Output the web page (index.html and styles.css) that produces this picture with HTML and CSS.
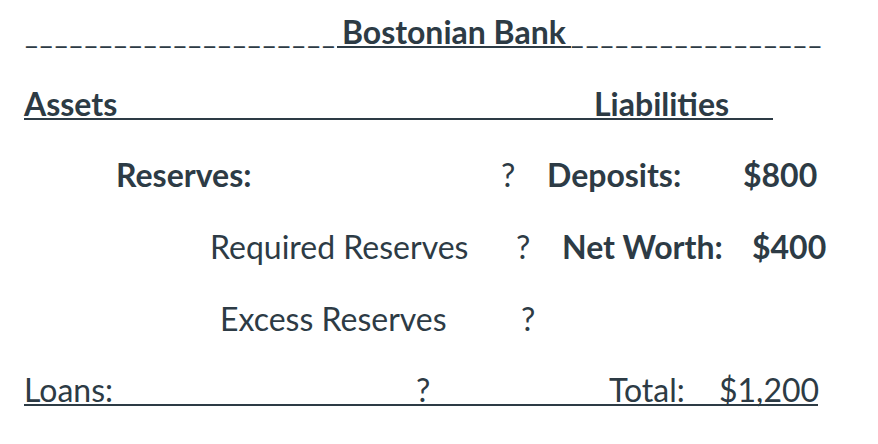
FILE: index.html
```html
<!DOCTYPE html>
<html>
<head>
<meta charset="utf-8">
<link rel="stylesheet" href="styles.css">
</head>
<body>
<div class="sheet">
  <div class="row title-row">
    <span class="dashes">_____________________</span>
    <span class="title">Bostonian Bank</span>
    <span class="dashes">_________________</span>
  </div>
  <div class="row">
    <div class="ruled heads">
      <span class="b">Assets</span>
      <span class="b">Liabilities</span>
    </div>
  </div>
  <div class="row r3">
    <span class="b">Reserves:</span>
    <span>?</span>
    <span class="b">Deposits:</span>
    <span class="b">$800</span>
  </div>
  <div class="row r4">
    <span>Required Reserves</span>
    <span>?</span>
    <span class="b">Net Worth:</span>
    <span class="b">$400</span>
  </div>
  <div class="row r5">
    <span>Excess Reserves</span>
    <span>?</span>
  </div>
  <div class="row">
    <div class="ruled totals">
      <span>Loans:</span>
      <span>?</span>
      <span>Total:</span>
      <span>$1,200</span>
    </div>
  </div>
</div>
</body>
</html>
```

FILE: styles.css
```css
html, body {
  margin: 0;
  padding: 0;
  background: #ffffff;
}
.sheet {
  font-family: Lato, "Noto Sans", sans-serif;
  font-size: 32px;
  color: #2d3b45;
  width: 878px;
}
.row {
  height: 71.64px;
  box-sizing: border-box;
  padding-top: 19.2px;
  line-height: 26.8px;
  display: flex;
  align-items: flex-start;
  white-space: nowrap;
}
.b {
  font-weight: 700;
}
.title-row {
  padding-left: 25px;
  align-items: baseline;
}
.dashes {
  font-weight: 400;
  font-size: 28px;
  letter-spacing: 2px;
}
.title {
  font-weight: 700;
  padding: 0 5px;
  border-bottom: 2px solid #2d3b45;
}
.ruled {
  display: grid;
  margin-left: 24px;
  border-bottom: 2px solid #2d3b45;
}
.heads {
  width: 749px;
  grid-template-columns: 570px auto;
}
.totals {
  width: 794px;
  grid-template-columns: 392px 193px 110px auto;
}
.r3 {
  display: grid;
  padding-left: 116px;
  grid-template-columns: 385px 46px 196px auto;
}
.r4 {
  display: grid;
  padding-left: 210px;
  grid-template-columns: 306px 46px 190px auto;
}
.r5 {
  display: grid;
  padding-left: 220px;
  grid-template-columns: 301px auto;
}
```
